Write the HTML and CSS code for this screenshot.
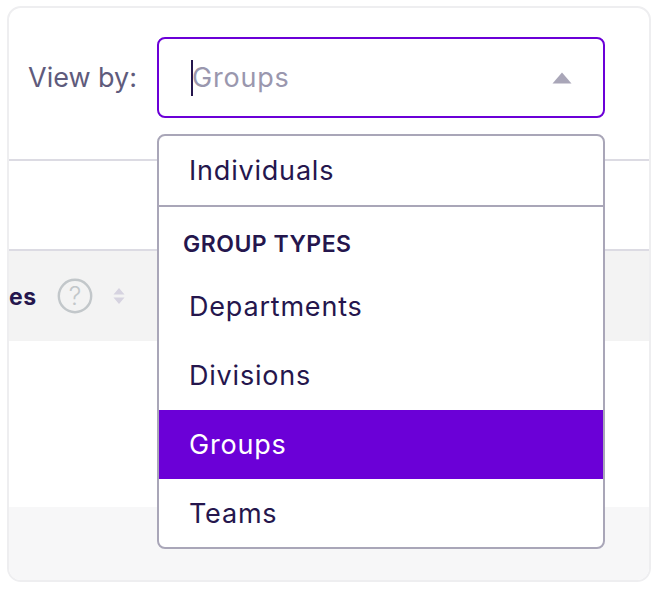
FILE: index.html
```html
<!DOCTYPE html>
<html lang="en">
<head>
<meta charset="utf-8">
<title>View by</title>
<link rel="stylesheet" href="styles.css">
</head>
<body>
<main class="card">
  <section class="toolbar">
    <span class="view-label">View by:</span>
    <div class="select-wrap">
      <div class="select">
        <span class="caret"></span>
        <span class="select-value">Groups</span>
        <svg class="arrow" width="20" height="12" viewBox="0 0 20 12"><path d="M10 0.5 L19.5 11.5 H0.5 Z" fill="#a9a6b8"/></svg>
      </div>
      <div class="menu">
        <div class="option option-first">Individuals</div>
        <div class="group-title">GROUP TYPES</div>
        <div class="option">Departments</div>
        <div class="option">Divisions</div>
        <div class="option option-active">Groups</div>
        <div class="option">Teams</div>
      </div>
    </div>
  </section>
  <div class="gap"></div>
  <section class="table-head">
    <span class="col-title">es</span>
    <svg class="help" width="36" height="36" viewBox="0 0 36 36"><circle cx="18" cy="18" r="16.2" fill="none" stroke="#c2c7ca" stroke-width="2.4"/><text x="18" y="27" text-anchor="middle" class="help-mark">?</text></svg>
    <svg class="sort" width="12" height="16" viewBox="0 0 12 16"><path d="M6 0 L11.5 6.5 H0.5 Z M6 16 L11.5 9.5 H0.5 Z" fill="#d6d3e0"/></svg>
  </section>
  <div class="table-row"></div>
  <div class="table-foot"></div>
</main>
</body>
</html>
```
FILE: styles.css
```css
* { box-sizing: border-box; }
html, body { margin: 0; padding: 0; background: #fff; }
body {
  width: 661px;
  height: 589px;
  padding: 6px 10px 7px 7px;
  font-family: "Inter", "Liberation Sans", sans-serif;
  color: #25164d;
  overflow: hidden;
}
.card {
  height: 576px;
  border: 2px solid #eeeef0;
  border-radius: 14px;
  overflow: hidden;
  display: flex;
  flex-direction: column;
  background: #fff;
}
.toolbar {
  height: 153px;
  flex: none;
  display: flex;
  align-items: flex-start;
  padding: 29px 0 0 19px;
  border-bottom: 2px solid #dcdbe3;
}
.view-label {
  width: 129px;
  font-size: 27px;
  line-height: 81px;
  color: #5f5b7c;
}
.select-wrap { position: relative; width: 448px; }
.select {
  height: 81px;
  border: 2px solid #6b00d7;
  border-radius: 8px;
  display: flex;
  align-items: center;
  padding: 0 31px 0 32px;
  background: #fff;
}
.caret { width: 2px; height: 36px; background: #25164d; flex: none; }
.select-value { flex: 1; margin-left: -1px; font-size: 27px; letter-spacing: 0.8px; color: #9a97ae; }
.arrow { flex: none; }
.menu {
  position: absolute;
  top: 97px;
  left: 0;
  width: 448px;
  height: 415px;
  border: 2px solid #a9a6b8;
  border-radius: 8px;
  background: #fff;
  overflow: hidden;
}
.option {
  height: 69px;
  padding-left: 30px;
  font-size: 27px;
  line-height: 69px;
  letter-spacing: 0.8px;
  color: #25164d;
}
.option-first { height: 71px; border-bottom: 2px solid #a9a6b8; }
.option-active { background: #6b00d7; color: #fff; }
.group-title {
  height: 65px;
  padding: 23px 0 0 24px;
  font-size: 23px;
  line-height: 28px;
  font-weight: 600;
  letter-spacing: 0.5px;
  color: #25164d;
}
.gap { height: 90px; flex: none; border-bottom: 2px solid #dcdbe3; }
.table-head {
  height: 90px;
  flex: none;
  background: #f3f3f3;
  display: flex;
  align-items: center;
}
.col-title { width: 48px; font-size: 23px; font-weight: 700; letter-spacing: 0.5px; line-height: 26px; padding-top: 2px; color: #25164d; }
.help { flex: none; }
.help-mark { font-family: "Inter", sans-serif; font-size: 25px; font-weight: 300; fill: #c2c7ca; }
.sort { margin-left: 20px; flex: none; }
.table-row { height: 166px; flex: none; }
.table-foot { flex: 1; background: #f7f7f8; }
```
